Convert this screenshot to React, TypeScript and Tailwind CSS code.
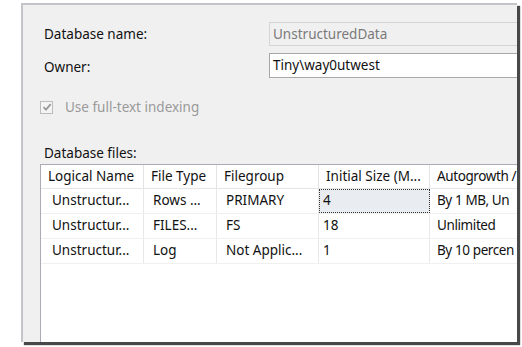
const rows = [
  ['Unstructur...', 'Rows ...', 'PRIMARY', '4', 'By 1 MB, Un'],
  ['Unstructur...', 'FILES...', 'FS', '18', 'Unlimited'],
  ['Unstructur...', 'Log', 'Not Applic...', '1', 'By 10 percen'],
];

const cols = ['w-[103px]', 'w-[73px]', 'w-[102px]', 'w-[111px]', 'w-[120px] tracking-[-0.4px]'];
const headers = ['Logical Name', 'File Type', 'Filegroup', 'Initial Size (M...', 'Autogrowth /'];

const App = () => {
  return (
    <div
      className="w-[522px] h-[347px] bg-white overflow-hidden text-[13.5px] text-[#111]"
      style={{ fontFamily: '"Noto Sans", "Open Sans", sans-serif' }}
    >
      <div className="ml-[21px] mt-[3px] w-[496px] h-[339px] bg-[#f0f0f0] border-l-2 border-t-2 border-[#c4c4c8] shadow-[3px_3px_1px_rgba(40,40,40,0.85)] overflow-hidden">
        <div className="flex flex-col pl-[21px] pt-[17px]">
          <div className="flex items-center h-[24px]">
            <span className="w-[225px] shrink-0">Database name:</span>
            <div className="h-[24px] w-[300px] shrink-0 border border-[#d4d4d4] bg-[#f0f0f0] text-[#7a7a7a] pl-[3px] flex items-center">
              UnstructuredData
            </div>
          </div>
          <div className="flex items-center h-[25px] mt-[7px]">
            <span className="w-[225px] shrink-0 pt-[3px]">Owner:</span>
            <div className="h-[25px] w-[300px] shrink-0 border border-[#a8a8a8] bg-white pl-[3px] flex items-center">
              Tiny\way0utwest
            </div>
          </div>
          <div className="flex items-center mt-[19px] -ml-[4px] gap-[12px] text-[#9a9a9a]">
            <div className="w-[13px] h-[13px] border border-[#bcbcbc] bg-[#f4f4f4] flex items-center justify-center">
              <svg width="10" height="10" viewBox="0 0 10 10">
                <path d="M1.5 5.2 L4 7.6 L8.7 2.2" fill="none" stroke="#9a9a9a" strokeWidth="1.8" />
              </svg>
            </div>
            <span>Use full-text indexing</span>
          </div>
          <div className="mt-[26px]">Database files:</div>
        </div>
        <div className="ml-[17px] mt-0 h-[200px] bg-white border-l border-t border-[#a9acb4] overflow-hidden">
          <div className="flex h-[24px] border-b border-[#e6e6e6] whitespace-nowrap">
            {headers.map((h, i) => (
              <div
                key={h}
                className={`${cols[i]} shrink-0 border-r border-[#e3e3e3] pl-[7px] flex items-center overflow-hidden`}
              >
                {h}
              </div>
            ))}
          </div>
          {rows.map((r, ri) => (
            <div key={ri} className="flex h-[25px] border-b border-[#f0f0f0] whitespace-nowrap">
              {r.map((c, ci) => (
                <div
                  key={ci}
                  className={`${cols[ci]} shrink-0 border-r border-[#e8e8e8] flex items-center overflow-hidden ${
                    ci === 0 ? 'pl-[11px]' : ci === 3 ? 'pl-[4px]' : ci === 4 ? 'pl-[7px]' : 'pl-[9px]'
                  } ${ri === 0 && ci === 3 ? 'bg-[#e9ecf0] outline outline-1 outline-dotted outline-[#333] -outline-offset-1' : ''}`}
                >
                  {c}
                </div>
              ))}
            </div>
          ))}
        </div>
      </div>
    </div>
  );
};

export default App;
